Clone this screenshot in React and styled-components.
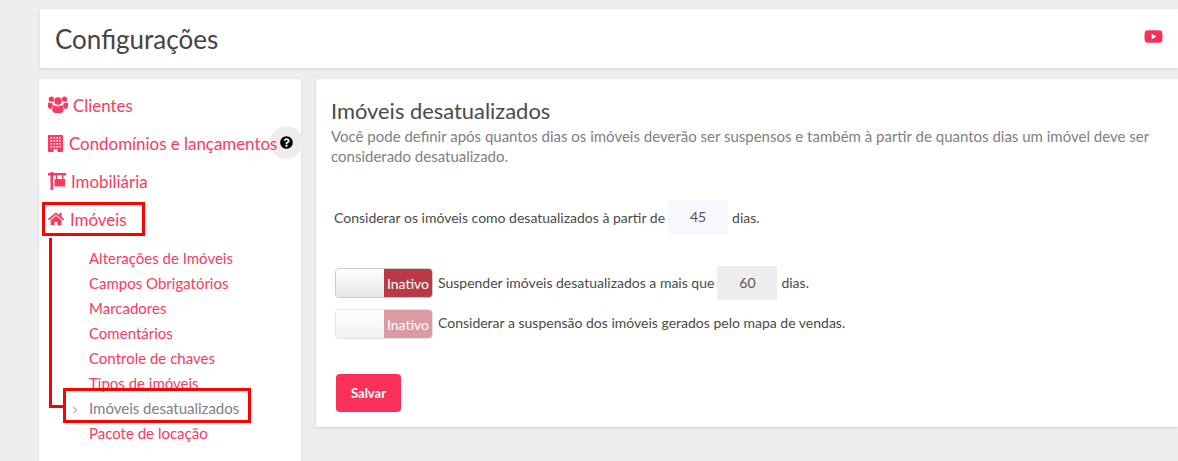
import React from 'react';
import styled, { createGlobalStyle } from 'styled-components';
import { FaHome, FaQuestionCircle, FaYoutube } from 'react-icons/fa';
import { ChevronRight } from 'lucide-react';

const GlobalStyle = createGlobalStyle`
    html, body {
        margin: 0;
        height: 100%;
        overflow: hidden;
        background: #eeeeee;
        font-family: Lato, "Liberation Sans", sans-serif;
    }
    * { box-sizing: border-box; }
`;

const UsersIcon = () => (
    <svg width="20" height="18" viewBox="0 0 20 18" fill="currentColor">
        <circle cx="3.4" cy="3.2" r="2.6" />
        <circle cx="16.6" cy="3.2" r="2.6" />
        <circle cx="10" cy="5" r="3.8" />
        <path d="M0 7.5C0 6.6.8 6.2 1.6 6.6c.8.5 1.6.6 2.6.4C4.4 8.4 5 9.4 5.6 10c-1.2.6-2 1.7-2.3 3.2C1 13 0 12 0 10.8z" />
        <path d="M20 7.5c0-.9-.8-1.3-1.6-.9-.8.5-1.6.6-2.6.4-.2 1.4-.8 2.4-1.4 3 1.2.6 2 1.7 2.3 3.2 2.3-.2 3.3-1.2 3.3-2.4z" />
        <path d="M6.5 9.3c2.1 1.5 4.9 1.5 7 0 1.5.5 2.2 2.2 2.2 4.5 0 2-1.2 3.2-3 3.2H7.3c-1.8 0-3-1.2-3-3.2 0-2.3.7-4 2.200-4.500z" />
    </svg>
);

const BuildingIcon = () => (
    <svg width="15" height="17" viewBox="0 0 15 17">
        <rect width="15" height="17" rx="1" fill="currentColor" />
        {[2.5, 5.5, 8.5, 11].map((x) =>
            [2, 5, 8, 11].map((y) => (
                <rect key={`${x}-${y}`} x={x} y={y} width="1.6" height="1.6" fill="#fff" />
            ))
        )}
        <rect x="5.5" y="14" width="4" height="3" fill="#fff" />
    </svg>
);

const SignIcon = () => (
    <svg width="18" height="18" viewBox="0 0 18 18" fill="currentColor">
        <rect x="2.5" width="2.5" height="18" />
        <rect y="1" width="18" height="2.5" />
        <rect x="8" y="3" width="1.2" height="4" />
        <rect x="14" y="3" width="1.2" height="4" />
        <rect x="6.5" y="7" width="10.5" height="7.5" />
    </svg>
);

const mainMenu = [
    { label: 'Clientes', icon: <UsersIcon />, gap: 5 },
    { label: 'Condomínios e lançamentos', icon: <BuildingIcon />, gap: 6, help: true },
    { label: 'Imobiliária', icon: <SignIcon />, gap: 5 },
    { label: 'Imóveis', icon: <FaHome size={16} />, gap: 6 },
];

const subMenu = [
    'Alterações de Imóveis',
    'Campos Obrigatórios',
    'Marcadores',
    'Comentários',
    'Controle de chaves',
    'Tipos de imóveis',
    'Imóveis desatualizados',
    'Pacote de locação',
];

const App = () => {
    return (
        <Page>
            <GlobalStyle />
            <Header>
                <Title>Configurações</Title>
                <VideoLink><FaYoutube size={19} /></VideoLink>
            </Header>
            <Columns>
                <Sidebar>
                    {mainMenu.map((item) => (
                        <MenuItem key={item.label} $gap={item.gap}>
                            {item.icon}
                            <MenuLabel>{item.label}</MenuLabel>
                            {item.help && (
                                <HelpBubble><FaQuestionCircle size={13} /></HelpBubble>
                            )}
                        </MenuItem>
                    ))}
                    <SubMenu>
                        {subMenu.map((label) => (
                            <SubItem key={label} $active={label === 'Imóveis desatualizados'}>
                                {label === 'Imóveis desatualizados' && (
                                    <Caret><ChevronRight size={12} strokeWidth={2} /></Caret>
                                )}
                                {label}
                            </SubItem>
                        ))}
                    </SubMenu>
                    <MarkMain />
                    <MarkLine />
                    <MarkSub />
                </Sidebar>
                <Content>
                    <Heading>Imóveis desatualizados</Heading>
                    <Lead>
                        Você pode definir após quantos dias os imóveis deverão ser suspensos e também à partir de
                        quantos dias um imóvel deve ser considerado desatualizado.
                    </Lead>
                    <FirstRow>
                        Considerar os imóveis como desatualizados à partir de
                        <DaysBox $tone="#f7f8fc">45</DaysBox>
                        dias.
                    </FirstRow>
                    <ToggleRow $top={32}>
                        <Toggle />
                        Suspender imóveis desatualizados a mais que
                        <DaysBox $tone="#eeeeee">60</DaysBox>
                        dias.
                    </ToggleRow>
                    <ToggleRow $top={8}>
                        <Toggle $faded />
                        <LiftedText>Considerar a suspensão dos imóveis gerados pelo mapa de vendas.</LiftedText>
                    </ToggleRow>
                    <SaveButton>Salvar</SaveButton>
                </Content>
            </Columns>
        </Page>
    );
};

const Toggle = ({ $faded }) => (
    <Switch $faded={$faded}>
        <Knob />
        <SwitchLabel>Inativo</SwitchLabel>
    </Switch>
);

const Page = styled.div`
    width: 1178px;
    height: 461px;
    overflow: hidden;
    padding: 9px 0 0 39px;
`;

const Header = styled.header`
    height: 59px;
    margin-left: 1px;
    padding: 0 15px;
    display: flex;
    align-items: center;
    justify-content: space-between;
    background: #fff;
    box-shadow: 0 1px 3px rgba(0, 0, 0, 0.12);
`;

const Title = styled.h1`
    margin: 0;
    font-size: 26px;
    font-weight: 400;
    line-height: 1;
    color: #444;
`;

const VideoLink = styled.a`
    display: flex;
    margin-top: -5px;
    color: #fb2f58;
`;

const Columns = styled.div`
    display: flex;
    align-items: flex-start;
    gap: 15px;
    margin-top: 11px;
`;

const Sidebar = styled.aside`
    position: relative;
    flex: 0 0 262px;
    height: 400px;
    padding: 7px 0 0 9px;
    background: #fff;
    box-shadow: 0 1px 3px rgba(0, 0, 0, 0.12);
`;

const MenuItem = styled.div`
    position: relative;
    height: 38px;
    display: flex;
    align-items: center;
    gap: ${(p) => p.$gap}px;
    font-size: 16.9px;
    color: #fb3a60;
    white-space: nowrap;
`;

const MenuLabel = styled.span`
    position: relative;
    z-index: 1;
`;

const HelpBubble = styled.span`
    position: absolute;
    left: 222px;
    top: 2px;
    width: 33px;
    height: 33px;
    border-radius: 50%;
    display: flex;
    align-items: center;
    justify-content: center;
    background: #eeeeee;
    color: #000;
`;

const SubMenu = styled.div`
    padding: 8px 0 0 41px;
`;

const SubItem = styled.div`
    position: relative;
    height: 25px;
    line-height: 25px;
    font-size: 15px;
    color: ${(p) => (p.$active ? '#808080' : '#fb3a60')};
`;

const Caret = styled.span`
    position: absolute;
    left: -20px;
    top: 2px;
    color: #808080;
`;

const MarkMain = styled.div`
    position: absolute;
    left: 3px;
    top: 123px;
    width: 103px;
    height: 34px;
    border: 3px solid #ff0000;
`;

const MarkLine = styled.div`
    position: absolute;
    left: 10px;
    top: 159px;
    width: 16px;
    height: 170px;
    border-left: 3px solid #ff0000;
    border-bottom: 3px solid #ff0000;
`;

const MarkSub = styled.div`
    position: absolute;
    left: 24px;
    top: 309px;
    width: 188px;
    height: 35px;
    border: 3px solid #ff0000;
`;

const Content = styled.main`
    flex: 1;
    height: 348px;
    padding: 20px 15px 0;
    background: #fff;
    box-shadow: 0 1px 3px rgba(0, 0, 0, 0.12);
    color: #4a4a4a;
    font-size: 14px;
`;

const Heading = styled.h2`
    margin: 0;
    font-size: 21.9px;
    font-weight: 400;
    line-height: 24px;
    color: #4a4a4a;
`;

const Lead = styled.p`
    margin: 3px 0 0;
    font-size: 15px;
    line-height: 20px;
    color: #808080;
`;

const FirstRow = styled.div`
    display: flex;
    align-items: center;
    gap: 4px;
    height: 34px;
    margin: 34px 0 0 3px;
`;

const DaysBox = styled.span`
    width: 60px;
    height: 34px;
    margin-left: -1px;
    line-height: 34px;
    text-align: center;
    font-size: 14px;
    color: #555;
    background: ${(p) => p.$tone};
`;

const ToggleRow = styled.div`
    display: flex;
    align-items: center;
    gap: 4px;
    height: 33px;
    margin: ${(p) => p.$top}px 0 0 3px;
`;

const LiftedText = styled.span`
    padding-bottom: 3px;
`;

const Switch = styled.div`
    display: flex;
    width: 98px;
    height: 30px;
    margin: 0 1px;
    border-radius: 4px;
    overflow: hidden;
    border: 1px solid #ccc;
    opacity: ${(p) => (p.$faded ? 0.5 : 1)};
`;

const Knob = styled.div`
    width: 48px;
    background: linear-gradient(to bottom, #ffffff, #e6e6e6);
`;

const SwitchLabel = styled.div`
    flex: 1;
    text-align: center;
    line-height: 30px;
    font-size: 14px;
    color: #fff;
    background: #b93a47;
`;

const SaveButton = styled.button`
    display: block;
    width: 65px;
    height: 38px;
    margin-top: 34px;
    margin-left: 5px;
    border: 0;
    border-radius: 4px;
    background: #fb3059;
    color: #fff;
    font-family: inherit;
    font-size: 13px;
    font-weight: 700;
`;

export default App;
